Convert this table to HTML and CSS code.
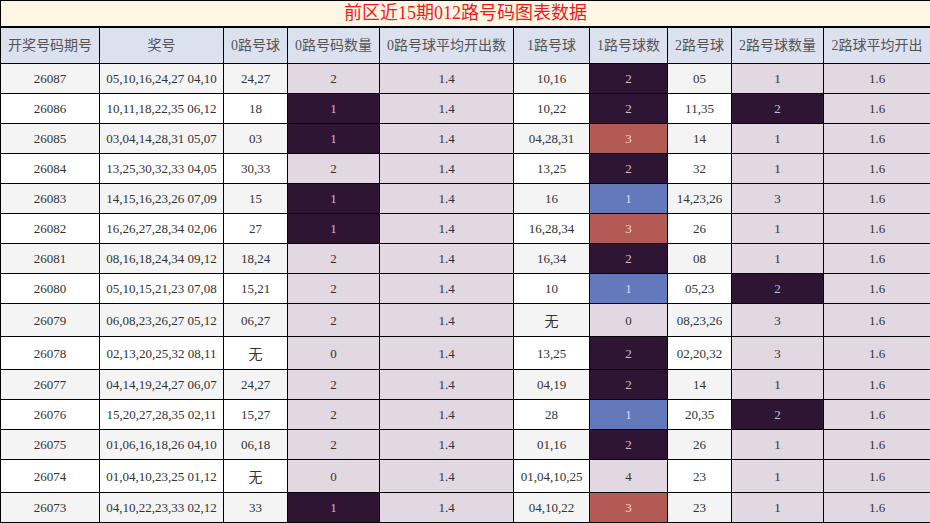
FILE: index.html
```html
<!DOCTYPE html>
<html lang="zh-CN">
<head>
<meta charset="utf-8">
<title>前区近15期012路号码图表数据</title>
<link rel="stylesheet" href="styles.css">
</head>
<body>
<table class="chart">
  <colgroup>
    <col class="c1"><col class="c2"><col class="c3"><col class="c4"><col class="c5">
    <col class="c6"><col class="c7"><col class="c8"><col class="c9"><col class="c10">
  </colgroup>
  <thead>
    <tr class="title-row"><th colspan="10" class="title">前区近15期012路号码图表数据</th></tr>
    <tr class="head-row">
      <th>开奖号码期号</th><th>奖号</th><th>0路号球</th><th>0路号码数量</th><th>0路号球平均开出数</th>
      <th>1路号球</th><th>1路号球数</th><th>2路号球</th><th>2路号球数量</th><th>2路球平均开出</th>
    </tr>
  </thead>
  <tbody>
    <tr><td>26087</td><td>05,10,16,24,27 04,10</td><td>24,27</td><td class="q">2</td><td class="q">1.4</td><td>10,16</td><td class="d">2</td><td>05</td><td class="q">1</td><td class="q">1.6</td></tr>
    <tr><td>26086</td><td>10,11,18,22,35 06,12</td><td>18</td><td class="d">1</td><td class="q">1.4</td><td>10,22</td><td class="d">2</td><td>11,35</td><td class="d">2</td><td class="q">1.6</td></tr>
    <tr><td>26085</td><td>03,04,14,28,31 05,07</td><td>03</td><td class="d">1</td><td class="q">1.4</td><td>04,28,31</td><td class="r">3</td><td>14</td><td class="q">1</td><td class="q">1.6</td></tr>
    <tr><td>26084</td><td>13,25,30,32,33 04,05</td><td>30,33</td><td class="q">2</td><td class="q">1.4</td><td>13,25</td><td class="d">2</td><td>32</td><td class="q">1</td><td class="q">1.6</td></tr>
    <tr><td>26083</td><td>14,15,16,23,26 07,09</td><td>15</td><td class="d">1</td><td class="q">1.4</td><td>16</td><td class="b">1</td><td>14,23,26</td><td class="q">3</td><td class="q">1.6</td></tr>
    <tr><td>26082</td><td>16,26,27,28,34 02,06</td><td>27</td><td class="d">1</td><td class="q">1.4</td><td>16,28,34</td><td class="r">3</td><td>26</td><td class="q">1</td><td class="q">1.6</td></tr>
    <tr><td>26081</td><td>08,16,18,24,34 09,12</td><td>18,24</td><td class="q">2</td><td class="q">1.4</td><td>16,34</td><td class="d">2</td><td>08</td><td class="q">1</td><td class="q">1.6</td></tr>
    <tr><td>26080</td><td>05,10,15,21,23 07,08</td><td>15,21</td><td class="q">2</td><td class="q">1.4</td><td>10</td><td class="b">1</td><td>05,23</td><td class="d">2</td><td class="q">1.6</td></tr>
    <tr><td>26079</td><td>06,08,23,26,27 05,12</td><td>06,27</td><td class="q">2</td><td class="q">1.4</td><td><span class="none">无</span></td><td class="q">0</td><td>08,23,26</td><td class="q">3</td><td class="q">1.6</td></tr>
    <tr><td>26078</td><td>02,13,20,25,32 08,11</td><td><span class="none">无</span></td><td class="q">0</td><td class="q">1.4</td><td>13,25</td><td class="d">2</td><td>02,20,32</td><td class="q">3</td><td class="q">1.6</td></tr>
    <tr><td>26077</td><td>04,14,19,24,27 06,07</td><td>24,27</td><td class="q">2</td><td class="q">1.4</td><td>04,19</td><td class="d">2</td><td>14</td><td class="q">1</td><td class="q">1.6</td></tr>
    <tr><td>26076</td><td>15,20,27,28,35 02,11</td><td>15,27</td><td class="q">2</td><td class="q">1.4</td><td>28</td><td class="b">1</td><td>20,35</td><td class="d">2</td><td class="q">1.6</td></tr>
    <tr><td>26075</td><td>01,06,16,18,26 04,10</td><td>06,18</td><td class="q">2</td><td class="q">1.4</td><td>01,16</td><td class="d">2</td><td>26</td><td class="q">1</td><td class="q">1.6</td></tr>
    <tr><td>26074</td><td>01,04,10,23,25 01,12</td><td><span class="none">无</span></td><td class="q">0</td><td class="q">1.4</td><td>01,04,10,25</td><td class="q">4</td><td>23</td><td class="q">1</td><td class="q">1.6</td></tr>
    <tr><td>26073</td><td>04,10,22,23,33 02,12</td><td>33</td><td class="d">1</td><td class="q">1.4</td><td>04,10,22</td><td class="r">3</td><td>23</td><td class="q">1</td><td class="q">1.6</td></tr>
  </tbody>
</table>
</body>
</html>
```
FILE: styles.css
```css
html, body {
  margin: 0;
  padding: 0;
  background: #ffffff;
}
body {
  font-family: "Liberation Serif", "Noto Sans CJK SC", serif;
  color: #333333;
}
.chart {
  width: 930px;
  border-collapse: collapse;
  table-layout: fixed;
  border: 1px solid #000000;
}
.c1 { width: 99px; }
.c2 { width: 124px; }
.c3 { width: 64px; }
.c4 { width: 92px; }
.c5 { width: 134px; }
.c6 { width: 76px; }
.c7 { width: 78px; }
.c8 { width: 64px; }
.c9 { width: 92px; }
.c10 { width: 107px; }
.chart th,
.chart td {
  border: 1px solid #000000;
  text-align: center;
  white-space: nowrap;
  overflow: hidden;
  padding: 0;
}
.chart .title {
  background: #fdf6e5;
  color: #f01c1c;
  font-size: 18px;
  font-weight: normal;
  height: 25px;
  line-height: 25px;
  border-bottom: 2px solid #000000;
}
.head-row th {
  background: #dce1f0;
  color: #555555;
  font-size: 14px;
  font-weight: normal;
  height: 35px;
  line-height: 20px;
}
.chart td {
  font-size: 13px;
  height: 29px;
  line-height: 15px;
  background: #ffffff;
}
.chart tbody tr:nth-child(odd) td { background: #f4f4f4; }
.chart tbody tr td.q { background: #e2d8e2; }
.chart tbody tr td.d { background: #2f1534; color: #cbbccb; }
.chart tbody tr td.r { background: #b35a55; color: #f2d6d2; }
.chart tbody tr td.b { background: #6478bc; color: #d6def2; }
.none {
  display: inline-block;
  font-family: "Noto Sans CJK SC", sans-serif;
  font-size: 14px;
  line-height: 32px;
  vertical-align: top;
}
```
